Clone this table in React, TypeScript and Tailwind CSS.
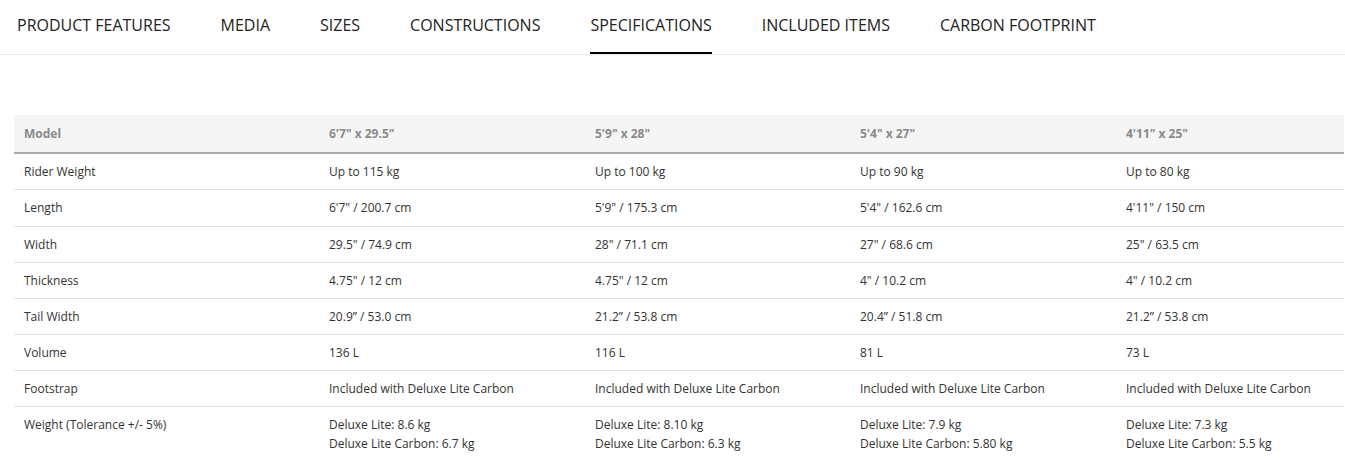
import React from "react";

const tabs = [
  "PRODUCT FEATURES",
  "MEDIA",
  "SIZES",
  "CONSTRUCTIONS",
  "SPECIFICATIONS",
  "INCLUDED ITEMS",
  "CARBON FOOTPRINT",
];

const header = ["Model", "6'7\" x 29.5\"", "5'9\" x 28\"", "5'4\" x 27\"", "4'11\" x 25\""];

const rows: string[][][] = [
  [["Rider Weight"], ["Up to 115 kg"], ["Up to 100 kg"], ["Up to 90 kg"], ["Up to 80 kg"]],
  [["Length"], ["6'7\" / 200.7 cm"], ["5'9\" / 175.3 cm"], ["5'4\" / 162.6 cm"], ["4'11\" / 150 cm"]],
  [["Width"], ["29.5\" / 74.9 cm"], ["28\" / 71.1 cm"], ["27\" / 68.6 cm"], ["25\" / 63.5 cm"]],
  [["Thickness"], ["4.75\" / 12 cm"], ["4.75\" / 12 cm"], ["4\" / 10.2 cm"], ["4\" / 10.2 cm"]],
  [["Tail Width"], ["20.9\u201d / 53.0 cm"], ["21.2\u201d / 53.8 cm"], ["20.4\u201d / 51.8 cm"], ["21.2\u201d / 53.8 cm"]],
  [["Volume"], ["136 L"], ["116 L"], ["81 L"], ["73 L"]],
  [
    ["Footstrap"],
    ["Included with Deluxe Lite Carbon"],
    ["Included with Deluxe Lite Carbon"],
    ["Included with Deluxe Lite Carbon"],
    ["Included with Deluxe Lite Carbon"],
  ],
  [
    ["Weight (Tolerance +/- 5%)"],
    ["Deluxe Lite: 8.6 kg", "Deluxe Lite Carbon: 6.7 kg"],
    ["Deluxe Lite: 8.10 kg", "Deluxe Lite Carbon: 6.3 kg"],
    ["Deluxe Lite: 7.9 kg", "Deluxe Lite Carbon: 5.80 kg"],
    ["Deluxe Lite: 7.3 kg", "Deluxe Lite Carbon: 5.5 kg"],
  ],
];

const colW = ["w-[305px]", "w-[266px]", "w-[265px]", "w-[266px]", "w-[228px]"];

export default function App() {
  return (
    <div
      className="w-[1345px] h-[462px] overflow-hidden bg-white text-[#333]"
      style={{ fontFamily: '"Open Sans", "Liberation Sans", sans-serif' }}
    >
      <nav className="flex gap-[50px] pl-[17px] border-b border-[#ebebeb] h-[55px]">
        {tabs.map((t) => (
          <div key={t} className="relative pt-[13px] text-[16px] leading-[24px] text-[#222]">
            {t}
            {t === "SPECIFICATIONS" && (
              <span className="absolute left-0 right-0 top-[52px] h-[2px] bg-black" />
            )}
          </div>
        ))}
      </nav>
      <div className="pt-[60px] pl-[14px]">
        <table className="border-collapse table-fixed w-[1330px] text-[12px]">
          <thead>
            <tr className="bg-[#f5f5f5] border-b-2 border-[#aaaaaa]">
              {header.map((h, i) => (
                <th
                  key={i}
                  className={`${colW[i]} h-[38px] pl-[10px] text-left font-bold text-[#8a8a8a] align-middle`}
                >
                  {h}
                </th>
              ))}
            </tr>
          </thead>
          <tbody>
            {rows.map((r, ri) => {
              const last = ri === rows.length - 1;
              const tall = ri === 1;
              return (
                <tr key={ri} className={last ? "" : "border-b border-[#e0e0e0]"}>
                  {r.map((c, ci) => (
                    <td
                      key={ci}
                      className={
                        last
                          ? "pl-[10px] pt-[8px] pb-[10px] align-top leading-[19px] text-[#333]"
                          : tall
                          ? "pl-[10px] h-[37px] align-middle leading-[19px] text-[#333]"
                          : "pl-[10px] h-[36px] align-middle leading-[19px] text-[#333]"
                      }
                    >
                      {c.map((line, li) => (
                        <div key={li}>{line}</div>
                      ))}
                    </td>
                  ))}
                </tr>
              );
            })}
          </tbody>
        </table>
      </div>
    </div>
  );
}
